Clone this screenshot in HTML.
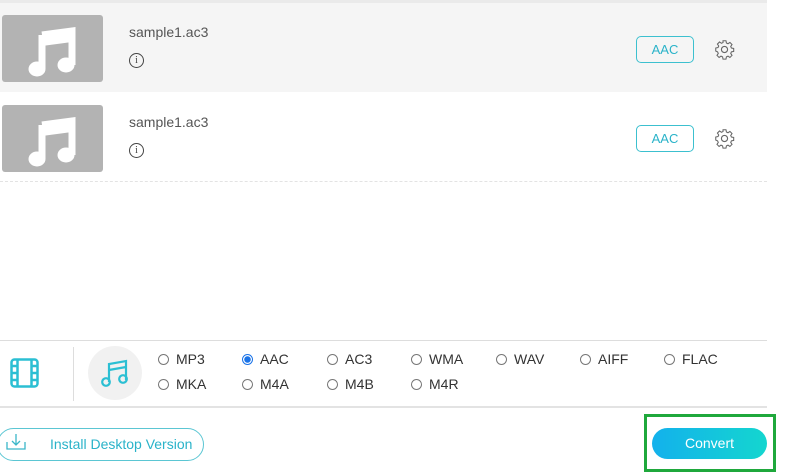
<!DOCTYPE html><html><head><style>
body{margin:0;width:800px;height:474px;background:#fff;font-family:"Liberation Sans",sans-serif;position:relative;overflow:hidden}
.a{position:absolute}
.thumb{position:absolute;left:2px;width:101px;height:67px;background:#b3b3b3;border-radius:3px}
.name{position:absolute;left:129px;font-size:14px;color:#555}
.info{position:absolute;left:129px;width:13px;height:13px;border:1px solid #444;border-radius:50%;font-size:10px;text-align:center;line-height:13px;color:#444;font-family:"Liberation Serif",serif}
.fmt{position:absolute;left:636px;width:56px;height:25px;border:1px solid #3cc0cf;border-radius:5px;color:#2ab3c9;font-size:13px;text-align:center;line-height:25px}
.r{position:absolute;font-size:14px;color:#333;display:flex;align-items:center}
.r i{display:inline-block;width:9px;height:9px;border:1px solid #777;border-radius:50%;margin-right:7px;box-sizing:content-box}
.r i.on{border-color:#1a73e8;background:radial-gradient(circle,#1a73e8 3px,#fff 3.5px)}
</style></head><body>
<div class="a" style="left:0;top:0;width:767px;height:3px;background:#eaeaea"></div>
<div class="a" style="left:0;top:3px;width:767px;height:89px;background:#f5f5f5"></div>
<div class="thumb" style="top:15px"></div><div class="thumb" style="top:105px"></div>
<svg class="a" style="left:28px;top:23px" width="50" height="54" viewBox="0 0 50 54"><path d="M14 12 L44 8 L44 42 M14 12 L14 46" stroke="#fff" stroke-width="7" fill="none"/><path d="M14 12 L44 8 L44 19 L14 23Z" fill="#fff"/><ellipse cx="9" cy="46" rx="8.5" ry="7.5" fill="#fff"/><ellipse cx="38" cy="42" rx="8.5" ry="7.5" fill="#fff"/></svg>
<svg class="a" style="left:28px;top:113px" width="50" height="54" viewBox="0 0 50 54"><path d="M14 12 L44 8 L44 42 M14 12 L14 46" stroke="#fff" stroke-width="7" fill="none"/><path d="M14 12 L44 8 L44 19 L14 23Z" fill="#fff"/><ellipse cx="9" cy="46" rx="8.5" ry="7.5" fill="#fff"/><ellipse cx="38" cy="42" rx="8.5" ry="7.5" fill="#fff"/></svg>
<div class="name" style="top:24px">sample1.ac3</div><div class="info" style="top:53px">i</div>
<div class="name" style="top:114px">sample1.ac3</div><div class="info" style="top:143px">i</div>
<div class="fmt" style="top:36px">AAC</div><div class="fmt" style="top:125px">AAC</div>
<svg class="a" style="left:714px;top:39px" width="21" height="21" viewBox="0 0 24 24"><circle cx="12" cy="12" r="3.5" fill="none" stroke="#666" stroke-width="1.3"/><path d="M10.3 2h3.4l.5 2.6 1.8.8 2.2-1.5 2.4 2.4-1.5 2.2.8 1.8 2.6.5v3.4l-2.6.5-.8 1.8 1.5 2.2-2.4 2.4-2.2-1.5-1.8.8-.5 2.6h-3.4l-.5-2.6-1.8-.8-2.2 1.5-2.4-2.4 1.5-2.2-.8-1.8L2 13.7v-3.4l2.6-.5.8-1.8-1.5-2.2 2.4-2.4 2.2 1.5 1.8-.8z" fill="none" stroke="#666" stroke-width="1.2"/></svg>
<svg class="a" style="left:714px;top:128px" width="21" height="21" viewBox="0 0 24 24"><circle cx="12" cy="12" r="3.5" fill="none" stroke="#666" stroke-width="1.3"/><path d="M10.3 2h3.4l.5 2.6 1.8.8 2.2-1.5 2.4 2.4-1.5 2.2.8 1.8 2.6.5v3.4l-2.6.5-.8 1.8 1.5 2.2-2.4 2.4-2.2-1.5-1.8.8-.5 2.6h-3.4l-.5-2.6-1.8-.8-2.2 1.5-2.4-2.4 1.5-2.2-.8-1.8L2 13.7v-3.4l2.6-.5.8-1.8-1.5-2.2 2.4-2.4 2.2 1.5 1.8-.8z" fill="none" stroke="#666" stroke-width="1.2"/></svg>
<div class="a" style="left:0;top:181px;width:767px;border-top:1px dashed #e3e3e3"></div>
<div class="a" style="left:0;top:340px;width:767px;height:1px;background:#ddd"></div>
<div class="a" style="left:0;top:406px;width:767px;height:2px;background:#e3e3e3"></div>
<svg class="a" style="left:10px;top:358px" width="29" height="30" viewBox="0 0 29 30"><rect x="1.5" y="1.5" width="26" height="27" rx="3" fill="none" stroke="#2bbfd3" stroke-width="2.5"/><path d="M7.5 1v28M21.5 1v28M1 8h6M1 15h6M1 22h6M22 8h6M22 15h6M22 22h6" stroke="#2bbfd3" stroke-width="2.5"/></svg>
<div class="a" style="left:73px;top:347px;width:1px;height:54px;background:#ddd"></div>
<div class="a" style="left:88px;top:346px;width:54px;height:54px;border-radius:50%;background:#f1f1f1"></div>
<svg class="a" style="left:100px;top:358px" width="30" height="30" viewBox="0 0 30 30"><path d="M9 24V6l17-3v19M9 12l17-3" fill="none" stroke="#2bbfd3" stroke-width="2.2"/><circle cx="6" cy="24" r="3.8" fill="none" stroke="#2bbfd3" stroke-width="2.2"/><circle cx="23" cy="21" r="3.8" fill="none" stroke="#2bbfd3" stroke-width="2.2"/></svg>
<div class="r" style="left:158px;top:351px"><i></i>MP3</div>
<div class="r" style="left:242px;top:351px"><i class="on"></i>AAC</div>
<div class="r" style="left:327px;top:351px"><i></i>AC3</div>
<div class="r" style="left:411px;top:351px"><i></i>WMA</div>
<div class="r" style="left:496px;top:351px"><i></i>WAV</div>
<div class="r" style="left:580px;top:351px"><i></i>AIFF</div>
<div class="r" style="left:664px;top:351px"><i></i>FLAC</div>
<div class="r" style="left:158px;top:376px"><i></i>MKA</div>
<div class="r" style="left:242px;top:376px"><i></i>M4A</div>
<div class="r" style="left:327px;top:376px"><i></i>M4B</div>
<div class="r" style="left:411px;top:376px"><i></i>M4R</div>
<div class="a" style="left:-3px;top:428px;width:205px;height:31px;border:1px solid #5bc6d3;border-radius:17px"></div>
<svg class="a" style="left:6px;top:433px" width="20" height="18" viewBox="0 0 20 18"><path d="M1 9v7h18V9M10 1v11M6 8l4 4 4-4" fill="none" stroke="#3bb7c9" stroke-width="1.3"/></svg>
<div class="a" style="left:50px;top:436px;font-size:14px;color:#2ab3c9">Install Desktop Version</div>
<div class="a" style="left:644px;top:414px;width:126px;height:52px;border:3px solid #1fa83c"></div>
<div class="a" style="left:652px;top:428px;width:115px;height:31px;border-radius:16px;background:linear-gradient(90deg,#13b1ec,#14d6cf);color:#fff;font-size:14px;text-align:center;line-height:31px">Convert</div>
</body></html>
